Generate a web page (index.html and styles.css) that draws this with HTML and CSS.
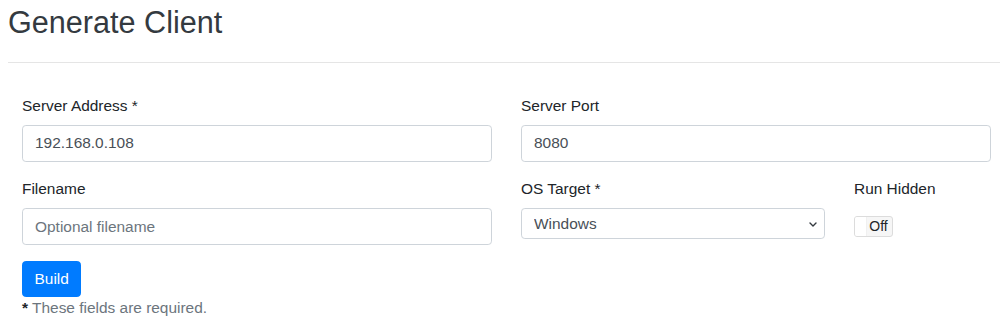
FILE: index.html
```html
<!DOCTYPE html>
<html lang="en">
<head>
<meta charset="utf-8">
<title>Generate Client</title>
<link rel="stylesheet" href="styles.css">
</head>
<body>
<h2 class="title">Generate Client</h2>
<hr class="divider">
<form class="client-form">
  <div class="grid">
    <div class="group">
      <label class="label" for="addr">Server Address *</label>
      <input class="control" id="addr" type="text" value="192.168.0.108">
    </div>
    <div class="group span2">
      <label class="label" for="port">Server Port</label>
      <input class="control" id="port" type="text" value="8080">
    </div>
    <div class="group">
      <label class="label" for="fname">Filename</label>
      <input class="control" id="fname" type="text" placeholder="Optional filename">
    </div>
    <div class="group">
      <label class="label" for="os">OS Target *</label>
      <div class="select-wrap">
        <select class="select" id="os">
          <option>Windows</option>
          <option>Linux</option>
          <option>macOS</option>
        </select>
        <svg class="chevron" width="8" height="5" viewBox="0 0 8 5"><path d="M1 1 L4 4 L7 1" fill="none" stroke="#343a40" stroke-width="1.4" stroke-linecap="round" stroke-linejoin="round"/></svg>
      </div>
    </div>
    <div class="group">
      <span class="label">Run Hidden</span>
      <div class="toggle">
        <span class="toggle-handle"></span>
        <span class="toggle-off">Off</span>
      </div>
    </div>
  </div>
  <button class="btn" type="button">Build</button>
  <div class="note"><b class="star">*</b> These fields are required.</div>
</form>
</body>
</html>
```

FILE: styles.css
```css
html, body {
  margin: 0;
  padding: 0;
  background: #fff;
}
body {
  font-family: "Liberation Sans", Arial, sans-serif;
  font-size: 15.45px;
  line-height: 22.9px;
  color: #212529;
}
.title {
  margin: 0 0 7.6px 8px;
  padding-top: 3.5px;
  font-size: 30.6px;
  line-height: 36.7px;
  font-weight: 400;
  color: #343a40;
}
.divider {
  margin: 21.5px 0 0 8px;
  border: 0;
  border-top: 1px solid rgba(0, 0, 0, 0.1);
  height: 0;
}
.client-form {
  padding: 32px 9px 0 22px;
}
.grid {
  display: grid;
  grid-template-columns: 470px 304px 137px;
  column-gap: 29px;
}
.span2 {
  grid-column: span 2;
}
.group {
  margin-bottom: 16.3px;
}
.label {
  display: block;
  margin-bottom: 7.64px;
}
.control {
  display: block;
  box-sizing: border-box;
  width: 100%;
  height: 36.3px;
  padding: 5.7px 11.5px 5.7px 12px;
  font-family: inherit;
  font-size: 15.45px;
  line-height: 22.9px;
  color: #495057;
  background: #fff;
  border: 1px solid #ced4da;
  border-radius: 3.8px;
  outline: none;
}
.control::placeholder {
  color: #6c757d;
  opacity: 1;
}
.select-wrap {
  position: relative;
  width: 304px;
}
.select {
  display: block;
  box-sizing: border-box;
  width: 100%;
  height: 31px;
  padding: 0 24px 0 12px;
  font-family: inherit;
  font-size: 15.45px;
  color: #495057;
  background: #fff;
  border: 1px solid #ced4da;
  border-radius: 3.8px;
  -webkit-appearance: none;
  appearance: none;
  outline: none;
}
.chevron {
  position: absolute;
  right: 8px;
  top: 13.5px;
  pointer-events: none;
}
.toggle {
  display: flex;
  box-sizing: border-box;
  width: 39px;
  height: 21px;
  margin-top: 15.6px;
  border: 1px solid #dcdcdc;
  border-radius: 3px;
  overflow: hidden;
  background: #f6f6f6;
}
.toggle-handle {
  width: 11px;
  background: #fff;
  border-right: 1px solid #f0f0f0;
}
.toggle-off {
  flex: 1;
  font-size: 14px;
  line-height: 19px;
  text-align: center;
  color: #212529;
  padding-right: 2px;
}
.btn {
  display: block;
  box-sizing: border-box;
  height: 36.3px;
  padding: 5.7px 11.5px;
  font-family: inherit;
  font-size: 15.45px;
  line-height: 22.9px;
  color: #fff;
  background: #007bff;
  border: 1px solid #007bff;
  border-radius: 3.8px;
}
.note {
  color: #6c757d;
}
.star {
  color: #212529;
}
```
